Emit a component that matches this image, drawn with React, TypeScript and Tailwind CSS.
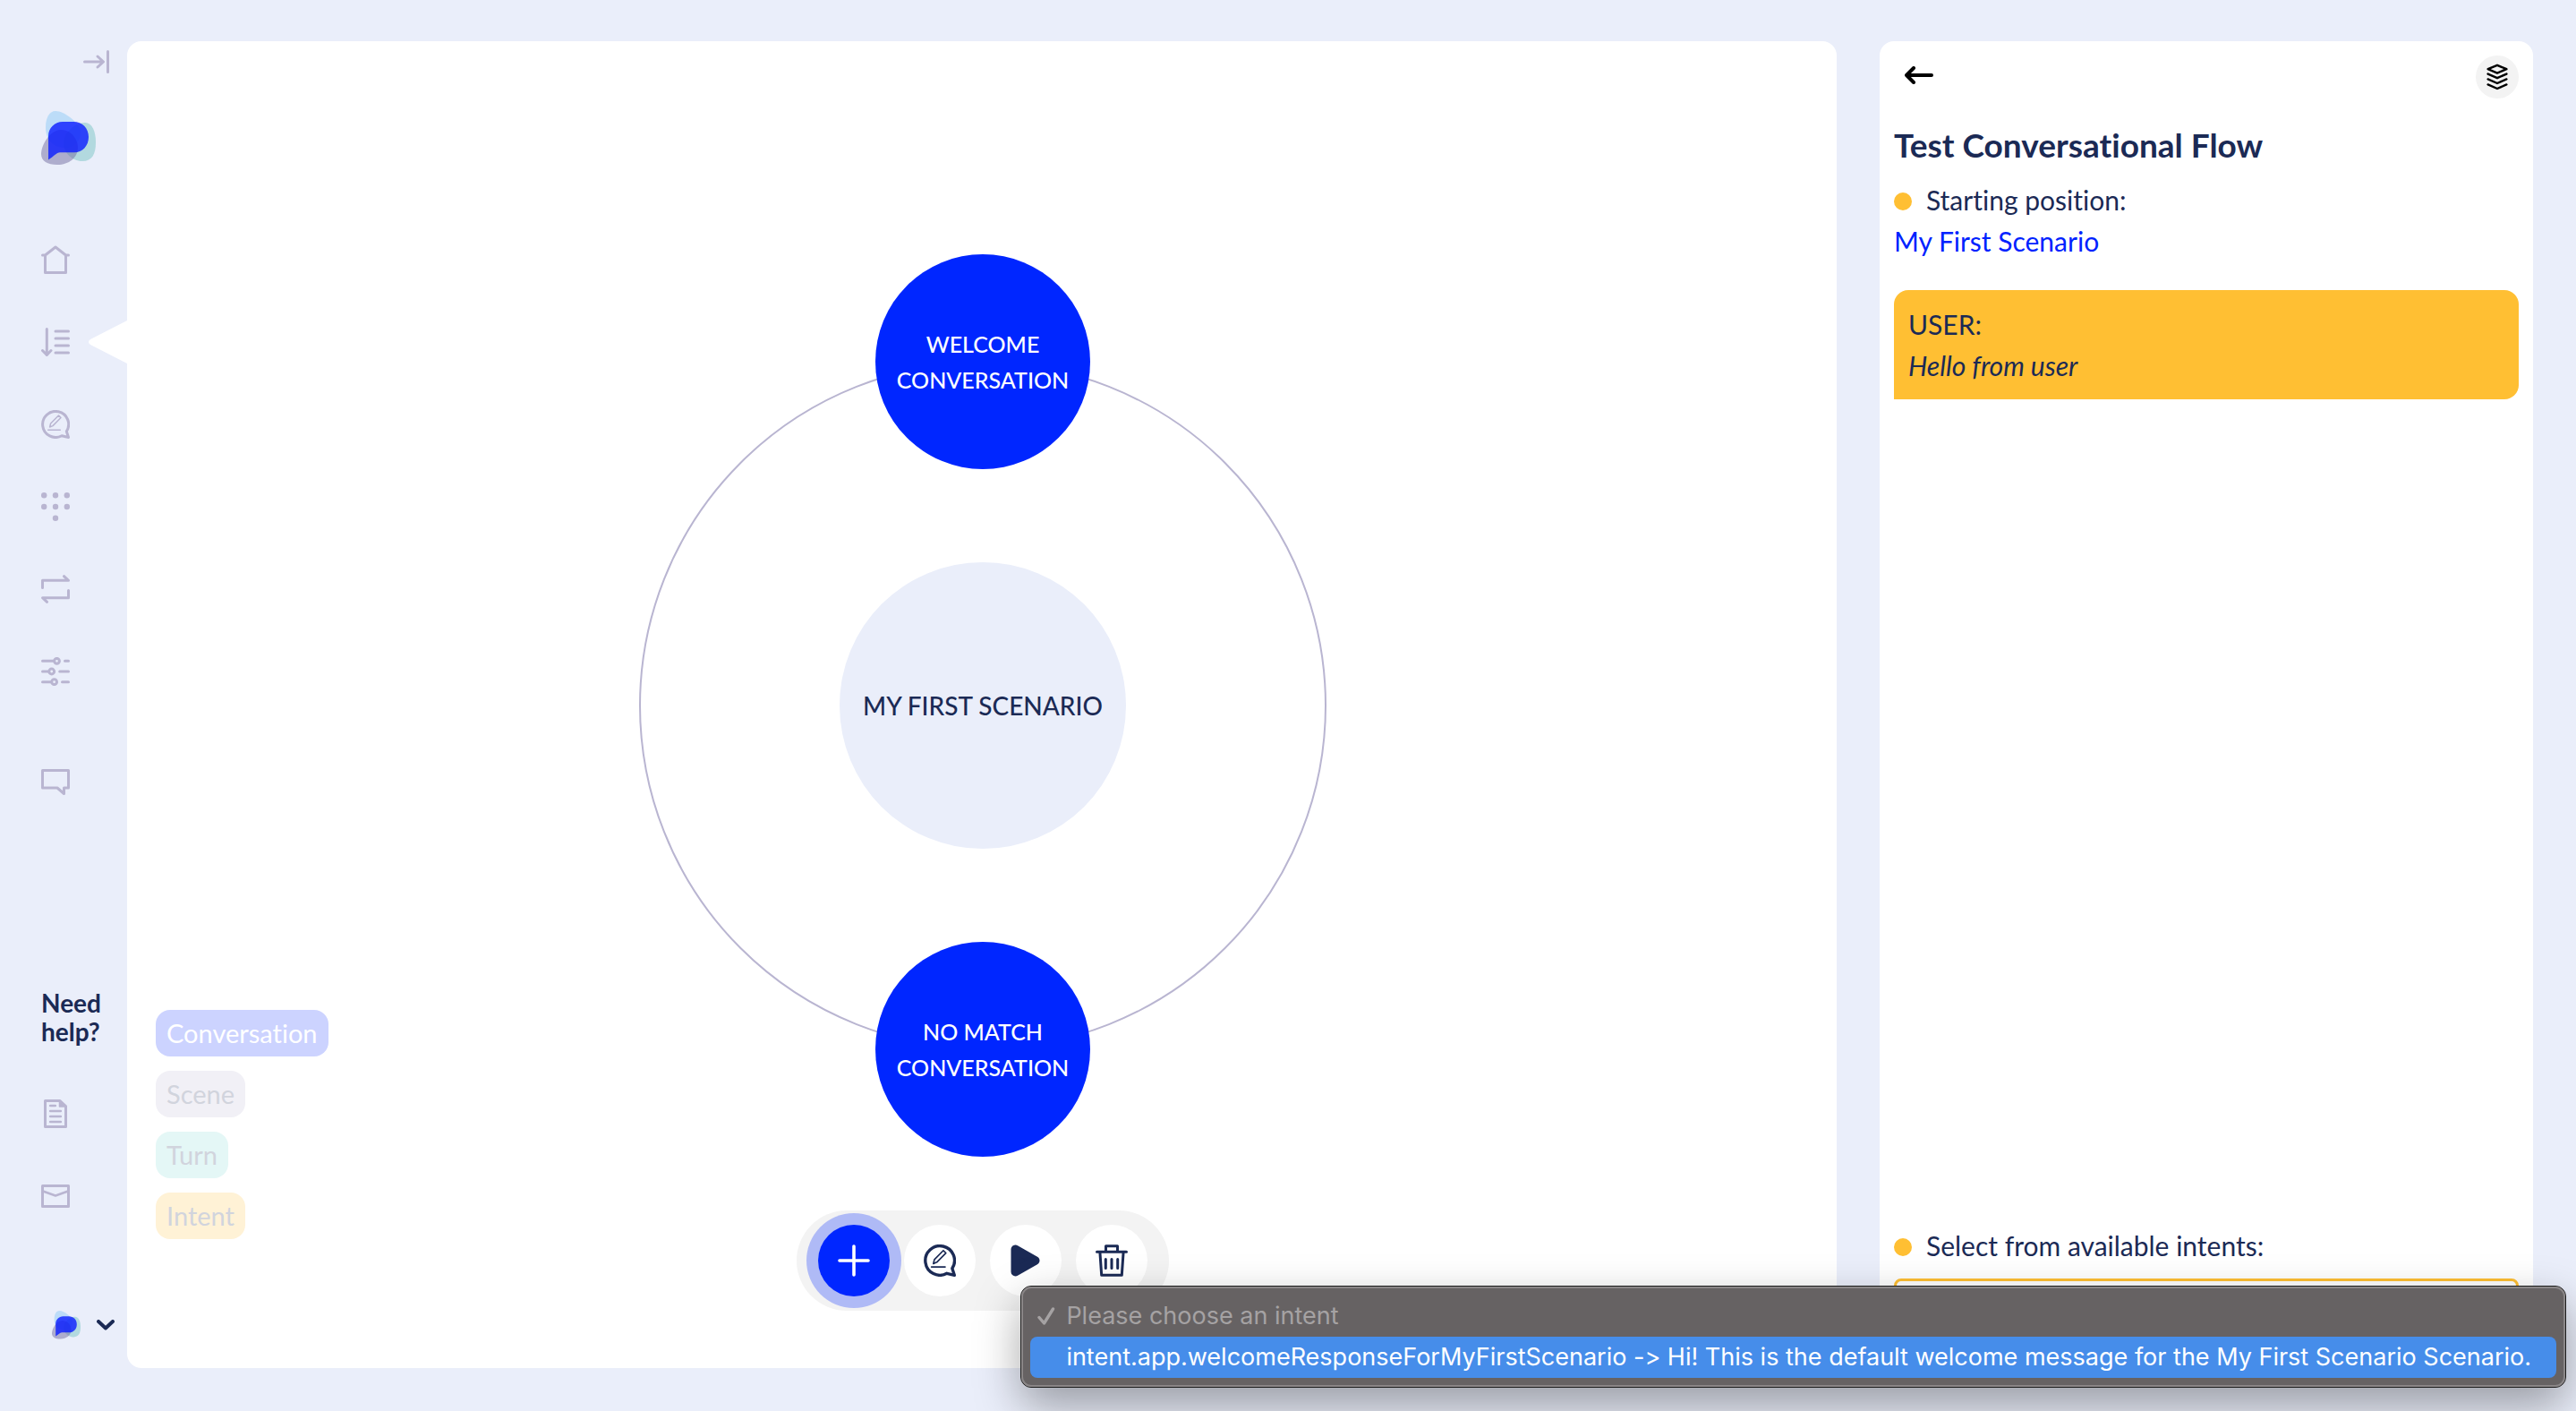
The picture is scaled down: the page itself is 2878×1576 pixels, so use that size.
import type { ReactNode } from 'react';

type IconProps = { className?: string };

function Stroke({ box, className, children }: { box: string; className?: string; children: ReactNode }) {
  return (
    <svg
      viewBox={box}
      className={className}
      fill="none"
      stroke="currentColor"
      strokeWidth={3}
      strokeLinecap="round"
      strokeLinejoin="round"
      aria-hidden="true"
    >
      {children}
    </svg>
  );
}

function Logo({ className }: IconProps) {
  return (
    <svg viewBox="0 0 61 61" className={className} aria-hidden="true">
      <path d="M16 0C26 0 44 14 44 24C44 34 36 41 28 41C14 41 5 33 5 18C5 8 9 0 16 0Z" fill="#bcdcf8" />
      <path d="M49 13C57 13 61 23 61 35C61 48 57 56 46 56C34 56 25 46 25 36C25 24 38 13 49 13Z" fill="#79c3c4" opacity="0.5" />
      <path d="M22 21C34 21 41 32 41 41C41 52 31 60 18 60C7 60 0 56 0 48C0 38 10 21 22 21Z" fill="#726c9f" opacity="0.5" />
      <path d="M8 54.5V28C8 19 15 12 24 12H36C46 12 53 19 53 29C53 39 46 46.3 37 46.3H21C17 46.3 14 51 8 54.5Z" fill="#0a1bff" opacity="0.8" />
    </svg>
  );
}

const CollapseIcon = () => (
  <Stroke box="0 0 29 26" className="h-[26px] w-[29px]">
    <path d="M1.5 13H22M16 7L22.5 13L16 19M27.5 1.5V24.5" />
  </Stroke>
);
const HomeIcon = () => (
  <Stroke box="0 0 32 32" className="size-8">
    <path d="M1.5 11H4.5L16 2L27.5 11H30.5M4.5 11V30.5H27.5V11" />
  </Stroke>
);
const ListIcon = () => (
  <Stroke box="0 0 32 32" className="size-8">
    <path d="M6.3 1.5V30.5M1.5 25.5L6.3 30.5L11 25.5M16 4H30.5M16 12H30.5M16 20H30.5M16 28H30.5" />
  </Stroke>
);
const EditIcon = ({ className = 'size-8' }: IconProps) => (
  <Stroke box="0 0 32 32" className={className}>
    <path d="M28.3 23.8A14.5 14.5 0 1 0 23 28.7L30.5 30.5Z" />
    <path d="M7.7 22.3H21.3M9.6 19L10.6 15L19.5 6L22 8.5L13 17.6Z" strokeWidth={1.5} />
  </Stroke>
);
const DotsIcon = () => (
  <svg viewBox="0 0 32 32" className="size-8" fill="currentColor" aria-hidden="true">
    {[[3.2, 3.2], [16, 3.2], [28.8, 3.2], [3.2, 16], [16, 16], [28.8, 16], [16, 28.8]].map(([x, y]) => (
      <circle key={x + '-' + y} cx={x} cy={y} r={3.2} />
    ))}
  </svg>
);
const LoopIcon = () => (
  <Stroke box="0 0 32 32" className="size-8">
    <path d="M1.5 14.5V6.3H30.5L25.5 1.7M30.5 17.5V25.7H1.5L6.5 30.3" />
  </Stroke>
);
const SlidersIcon = () => (
  <Stroke box="0 0 32 32" className="size-8">
    <path d="M1.5 4.3H14.5M26.5 4.3H30.5M1.5 16H8.5M20.7 16H30.5M1.5 27.7H11.5M23.5 27.7H30.5" />
    <circle cx="17.5" cy="4.3" r="2.9" />
    <circle cx="11.7" cy="16" r="2.9" />
    <circle cx="14.6" cy="27.7" r="2.9" />
  </Stroke>
);
const ChatIcon = () => (
  <Stroke box="0 0 32 32" className="size-8">
    <path d="M1.5 2.5H30.5V22H25.5V28.5L18 22H1.5Z" />
  </Stroke>
);
const DocIcon = () => (
  <Stroke box="0 0 32 32" className="size-8">
    <path d="M4.5 1.5H21L27.5 7.5V30.5H4.5Z" />
    <path d="M20.5 1.5V8H27Z" fill="currentColor" strokeWidth={1.5} />
    <path d="M10.2 7H15.8M10.2 13H21.8M10.2 19H21.8M10.2 25H21.8" strokeWidth={2.6} />
  </Stroke>
);
const MailIcon = () => (
  <Stroke box="0 0 32 32" className="size-8">
    <path d="M1.5 4.5H30.5V27.5H1.5Z" />
    <path d="M2 10.5L16 15.5L30 10.5" strokeWidth={2.4} />
  </Stroke>
);
const PlusIcon = () => (
  <Stroke box="0 0 36 36" className="size-9">
    <path d="M18 2V34M2 18H34" strokeWidth={3.6} />
  </Stroke>
);
const PlayIcon = () => (
  <svg viewBox="0 0 36 36" className="size-9" fill="currentColor" stroke="currentColor" strokeWidth={10} strokeLinejoin="round" aria-hidden="true">
    <path d="M6.5 5.5V30.5L28.5 18Z" />
  </svg>
);
const TrashIcon = () => (
  <Stroke box="0 0 36 36" className="size-9">
    <path d="M1.5 8.3H34.5M11.5 8V1.7H24.5V8M4.9 8.5L6.7 34.3H29.3L31.1 8.5M11.3 16.5V26.5M18 16.5V26.5M24.7 16.5V26.5" />
  </Stroke>
);
const BackIcon = () => (
  <Stroke box="0 0 32 20" className="h-5 w-8">
    <path d="M2 10H30M10 2L2 10L10 18" strokeWidth={4} />
  </Stroke>
);
const LayersIcon = () => (
  <Stroke box="0 0 24 30" className="h-[30px] w-6">
    <path
      d="M12 1.8L22.4 6.2L12 10.6L1.6 6.2ZM1.6 11.6L12 16.2L22.4 11.6M1.6 17.4L12 22L22.4 17.4M1.6 23.4L12 28L22.4 23.4"
      strokeWidth={2.4}
    />
  </Stroke>
);

const navItems = [
  { label: 'Home', icon: <HomeIcon /> },
  { label: 'Scenarios', icon: <ListIcon />, active: true },
  { label: 'Messages', icon: <EditIcon /> },
  { label: 'Components', icon: <DotsIcon /> },
  { label: 'Interpreters', icon: <LoopIcon /> },
  { label: 'Settings', icon: <SlidersIcon /> },
];

const legend = [
  { label: 'Conversation', className: 'bg-[#ccd3ff] text-white' },
  { label: 'Scene', className: 'bg-[#f1f0f6] text-[#d1d4dd]' },
  { label: 'Turn', className: 'bg-[#e4f7f6] text-[#d1d4dd]' },
  { label: 'Intent', className: 'bg-[#fff2d6] text-[#d1d4dd]' },
];

function Sidebar() {
  return (
    <aside className="flex w-[142px] shrink-0 flex-col pl-[46px] text-[#b9b5d1]">
      <button type="button" aria-label="Expand menu" className="mt-[10px] mr-5 self-end">
        <CollapseIcon />
      </button>
      <a href="#top" aria-label="Dashboard" className="mt-[42px] self-start">
        <Logo className="size-[61px]" />
      </a>
      <nav className="mt-[89px] flex flex-col gap-[60px]">
        {navItems.map((item) => (
          <a key={item.label} href="#nav" aria-label={item.label} className="relative block h-8">
            {item.active && (
              <svg viewBox="0 0 44 48" className="absolute -top-2 right-0 h-12 w-11 text-white" fill="currentColor" aria-hidden="true">
                <path d="M44 0L3 21Q-1 24 3 27L44 48Z" />
              </svg>
            )}
            {item.icon}
          </a>
        ))}
        <a href="#chat" aria-label="Webchat" className="mt-8 block h-8">
          <ChatIcon />
        </a>
      </nav>
      <div className="mt-auto flex flex-col gap-[60px]">
        <p className="text-[28px] leading-8 font-bold text-[#1b2a55]">Need help?</p>
        <a href="#docs" aria-label="Documentation" className="block h-8">
          <DocIcon />
        </a>
        <a href="#mail" aria-label="Contact" className="block h-8">
          <MailIcon />
        </a>
      </div>
      <button type="button" aria-label="Account" className="mt-28 mb-8 ml-3 flex items-center gap-[18px] self-start text-[#1b2a55]">
        <Logo className="size-8" />
        <Stroke box="0 0 20 12" className="h-3 w-5">
          <path d="M2 2L10 9.5L18 2" strokeWidth={4} />
        </Stroke>
      </button>
    </aside>
  );
}

function Orbit() {
  const node =
    'flex size-60 items-center justify-center rounded-full bg-[#0026ff] px-4 text-center text-[25px] leading-10 font-medium text-white';
  return (
    <div className="flex size-[768px] items-center justify-center rounded-full border-2 border-[#b9b5d1]">
      <div className="flex flex-col items-center gap-[104px]">
        <button type="button" className={node}>WELCOME CONVERSATION</button>
        <button type="button" className="flex size-80 items-center justify-center rounded-full bg-[#eaeefa] text-[28px] font-medium text-[#1b2a55]">
          MY FIRST SCENARIO
        </button>
        <button type="button" className={node}>NO MATCH CONVERSATION</button>
      </div>
    </div>
  );
}

function Toolbar() {
  const button = 'flex size-20 items-center justify-center rounded-full bg-white';
  return (
    <div className="flex gap-4 rounded-full bg-[#f3f3f3] px-6 py-4 text-[#1b2a55]">
      <button type="button" aria-label="Add" className="flex size-20 items-center justify-center rounded-full bg-[#0026ff] text-white ring-[13px] ring-[#0026ff]/28">
        <PlusIcon />
      </button>
      <button type="button" aria-label="Edit message" className={button}><EditIcon className="size-9" /></button>
      <button type="button" aria-label="Play" className={button}><PlayIcon /></button>
      <button type="button" aria-label="Delete" className={button}><TrashIcon /></button>
    </div>
  );
}

function IntentMenu() {
  return (
    <div
      role="listbox"
      aria-label="Intents"
      className="absolute top-2 right-[-53px] rounded-xl border border-[#1c1c1c] bg-[#666263] font-['Inter',sans-serif] text-[27px] leading-[46px] whitespace-nowrap shadow-[0_20px_50px_rgba(0,0,0,0.35)]"
    >
      <div className="rounded-[11px] border-2 border-[#8a8687] px-2 pt-2 pb-2">
        <div role="option" aria-selected="true" className="flex items-center gap-3 px-2 text-[#a5a2a3]">
          <Stroke box="0 0 20 20" className="size-5">
            <path d="M2 11.5L7.5 18L17.5 2" strokeWidth={3.4} />
          </Stroke>
          Please choose an intent
        </div>
        <div role="option" aria-selected="false" className="rounded-lg bg-[#468dea] pr-7 pl-10 text-white">
          intent.app.welcomeResponseForMyFirstScenario -&gt; Hi! This is the default welcome message for the My First Scenario Scenario.
        </div>
      </div>
    </div>
  );
}

function TestPanel() {
  return (
    <aside className="flex w-[730px] shrink-0 flex-col rounded-2xl bg-white p-4 text-[30px] leading-[46px] text-[#1b2a55]">
      <header className="flex items-start justify-between">
        <button type="button" aria-label="Back" className="mt-3 ml-3 text-black"><BackIcon /></button>
        <button type="button" aria-label="Layers" className="flex size-12 items-center justify-center rounded-full bg-[#f3f3f3] text-black">
          <LayersIcon />
        </button>
      </header>
      <h1 className="mt-[30px] text-[37px] leading-[44px] font-bold">Test Conversational Flow</h1>
      <p className="mt-4 flex items-center gap-4">
        <span className="mt-1 size-5 rounded-full bg-[#ffbf33]" />
        Starting position:
      </p>
      <a href="#scenario" className="self-start text-[#0022ff]">My First Scenario</a>
      <div className="mt-8 rounded-2xl rounded-bl-none bg-[#ffbf33] px-4 py-[15px]">
        <p>USER:</p>
        <p className="italic">Hello from user</p>
      </div>
      <label htmlFor="intent" className="mt-auto flex items-center gap-4">
        <span className="mt-1 size-5 rounded-full bg-[#ffbf33]" />
        Select from available intents:
      </label>
      <div className="relative mt-[14px]">
        <select id="intent" className="block h-[84px] w-full appearance-none rounded-lg border-[3px] border-[#ffbf33] bg-white px-4">
          <option>Please choose an intent</option>
        </select>
        <IntentMenu />
      </div>
    </aside>
  );
}

export default function App() {
  return (
    <div id="top" className="flex min-h-screen overflow-hidden bg-[#eaeefa] pt-[46px] pr-12 pb-12 font-['Lato',sans-serif] [font-variant-ligatures:none]">
      <Sidebar />
      <main className="relative mr-12 flex min-w-0 flex-1 items-center justify-center rounded-2xl bg-white pt-0.5 pl-0.5">
        <Orbit />
        <ul className="absolute bottom-36 left-8 flex flex-col items-start gap-4">
          {legend.map((item) => (
            <li key={item.label} className={`rounded-2xl px-3 text-[29px] leading-[52px] ${item.className}`}>
              {item.label}
            </li>
          ))}
        </ul>
        <div className="absolute inset-x-0 bottom-16 flex justify-center pl-0.5">
          <Toolbar />
        </div>
      </main>
      <TestPanel />
    </div>
  );
}
